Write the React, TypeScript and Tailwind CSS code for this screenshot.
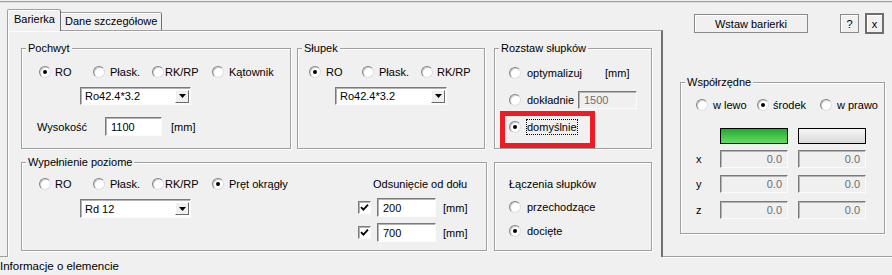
import React from "react";

const sunken =
  "border border-t-[#7a7a7a] border-l-[#7a7a7a] border-r-[#fbfbfb] border-b-[#fbfbfb] shadow-[inset_1px_1px_0_#b4b4b4]";

function Circle({ checked }: { checked?: boolean }) {
  return (
    <span className="flex w-[12px] h-[12px] shrink-0 items-center justify-center rounded-full border border-t-[#858585] border-l-[#858585] border-r-[#dedede] border-b-[#dedede] bg-white shadow-[inset_1px_1px_0_#cfcfcf]">
      {checked && <span className="w-[4px] h-[4px] rounded-full bg-black" />}
    </span>
  );
}

function Radio({
  checked,
  label,
  w = "",
  gap,
  focus,
}: {
  checked?: boolean;
  label: string;
  w?: string;
  gap: string;
  focus?: boolean;
}) {
  return (
    <div className={`flex items-center shrink-0 ${w}`}>
      <Circle checked={checked} />
      <span
        className={`${gap} whitespace-nowrap ${
          focus ? "border border-dotted border-black leading-[14px]" : ""
        }`}
      >
        {label}
      </span>
    </div>
  );
}

function Combo({ value, w, h }: { value: string; w: string; h: string }) {
  return (
    <div className={`flex items-center bg-white ${sunken} ${w} ${h}`}>
      <span className="pl-[4px] flex-1 whitespace-nowrap">{value}</span>
      <span className="mr-[1px] w-[14px] h-[13px] flex items-center justify-center bg-[#f0f0f0] border border-t-white border-l-white border-r-[#6a6a6a] border-b-[#6a6a6a]">
        <svg width="7" height="4" viewBox="0 0 7 4">
          <polygon points="0,0 7,0 3.5,4" fill="#000" />
        </svg>
      </span>
    </div>
  );
}

function Input({
  value,
  w,
  h,
  disabled,
  right,
}: {
  value: string;
  w: string;
  h: string;
  disabled?: boolean;
  right?: boolean;
}) {
  return (
    <div
      className={`flex items-center shrink-0 ${sunken} ${w} ${h} ${
        disabled ? "bg-[#f0f0f0] text-[#6d6d6d]" : "bg-white"
      } ${right ? "justify-end pr-[5px]" : "pl-[5px]"}`}
    >
      {value}
    </div>
  );
}

function Check() {
  return (
    <span className={`flex w-[13px] h-[13px] shrink-0 items-center justify-center bg-white ${sunken}`}>
      <svg width="9" height="9" viewBox="0 0 9 9">
        <path d="M1 4.2 L3.4 6.6 L8 1.6" stroke="#000" strokeWidth="1.8" fill="none" />
      </svg>
    </span>
  );
}

function Group({
  title,
  className,
  children,
}: {
  title?: string;
  className: string;
  children?: React.ReactNode;
}) {
  return (
    <div
      className={`relative shrink-0 border border-[#a0a0a0] shadow-[inset_1px_1px_0_#fff,1px_1px_0_#fff] ${className}`}
    >
      {title && (
        <div className="-mt-[7px] ml-[4px] w-fit px-[2px] bg-[#f0f0f0] leading-[13px] whitespace-nowrap">
          {title}
        </div>
      )}
      {children}
    </div>
  );
}

export default function App() {
  return (
    <div className="w-[892px] h-[275px] overflow-hidden bg-[#f0f0f0] text-black text-[11px] leading-[14px] font-['Liberation_Sans',Arial,sans-serif]">
      <div className="h-[1px]" />
      <div className="h-[1px] bg-[#a0a0a0]" />
      <div className="h-[1px] bg-[#dcdcdc]" />
      <div className="flex h-[254px]">
        {/* left corner tick */}
        <div className="w-[7px] shrink-0 flex flex-col justify-end">
          <div className="h-[2px] border-b border-[#a0a0a0]" />
        </div>
        {/* left: tab control */}
        <div className="w-[656px] shrink-0 flex flex-col">
          <div className="mt-[6px] h-[21px] flex items-end">
            <div className="relative z-10 -mb-[1px] h-[22px] w-[54px] border-l border-t border-r border-[#a0a0a0] border-r-[#6f6f6f] rounded-t-[2px] bg-[#f0f0f0] shadow-[inset_1px_1px_0_#fff] pl-[6px] pt-[2px]">
              Barierka
            </div>
            <div className="h-[18px] w-[101px] border-t border-r border-[#a0a0a0] border-r-[#6f6f6f] rounded-tr-[2px] shadow-[inset_0_1px_0_#fff] pl-[4px] pt-[1px] whitespace-nowrap">
              Dane szczegółowe
            </div>
          </div>
          <div className="flex-1 border-l border-t border-r-2 border-[#a0a0a0] border-r-[#707070] shadow-[inset_1px_1px_0_#fff] pl-[13px] pt-[17px]">
            {/* top row */}
            <div className="flex h-[101px]">
              <Group title="Pochwyt" className="w-[270px] h-[101px]">
                <div className="mt-[10px] ml-[17px] flex h-[14px]">
                  <Radio checked label="RO" w="w-[54px]" gap="ml-[4px]" />
                  <Radio label="Płask." w="w-[59px]" gap="ml-[5px]" />
                  <Radio label="RK/RP" w="w-[60px]" gap="ml-[1px]" />
                  <Radio label="Kątownik" gap="ml-[5px]" />
                </div>
                <div className="mt-[8px] ml-[58px]">
                  <Combo value="Ro42.4*3.2" w="w-[111px]" h="h-[18px]" />
                </div>
                <div className="mt-[12px] flex items-center h-[19px]">
                  <span className="ml-[15px] w-[68px]">Wysokość</span>
                  <Input value="1100" w="w-[57px]" h="h-[19px]" />
                  <span className="ml-[9px]">[mm]</span>
                </div>
              </Group>
              <Group title="Słupek" className="ml-[6px] w-[188px] h-[101px]">
                <div className="mt-[10px] ml-[11px] flex h-[14px]">
                  <Radio checked label="RO" w="w-[53px]" gap="ml-[5px]" />
                  <Radio label="Płask." w="w-[59px]" gap="ml-[5px]" />
                  <Radio label="RK/RP" gap="ml-[4px]" />
                </div>
                <div className="mt-[8px] ml-[37px]">
                  <Combo value="Ro42.4*3.2" w="w-[112px]" h="h-[18px]" />
                </div>
              </Group>
              <Group title="Rozstaw słupków" className="ml-[9px] w-[158px] h-[101px]">
                <div className="mt-[11px] ml-[14px] flex items-center h-[14px]">
                  <Radio label="optymalizuj" w="w-[96px]" gap="ml-[6px]" />
                  <span>[mm]</span>
                </div>
                <div className="mt-[11px] ml-[14px] flex items-center h-[18px]">
                  <Radio label="dokładnie" w="w-[69px]" gap="ml-[6px]" />
                  <div className="-mt-[1px]">
                    <Input value="1500" w="w-[59px]" h="h-[18px]" disabled />
                  </div>
                </div>
                <div className="mt-[10px] ml-[14px] flex items-center h-[16px]">
                  <Radio checked focus label="domyślnie" gap="ml-[5px]" />
                </div>
                <div className="absolute left-[5px] top-[62px] w-[95px] h-[37px] border-[5px] border-[#ed1c24]" />
              </Group>
            </div>
            {/* bottom row */}
            <div className="mt-[13px] flex h-[89px]">
              <Group title="Wypełnienie poziome" className="w-[466px] h-[89px]">
                <div className="flex">
                  <div className="w-[336px] shrink-0">
                    <div className="mt-[8px] ml-[17px] flex h-[14px]">
                      <Radio label="RO" w="w-[54px]" gap="ml-[4px]" />
                      <Radio label="Płask." w="w-[59px]" gap="ml-[5px]" />
                      <Radio label="RK/RP" w="w-[60px]" gap="ml-[1px]" />
                      <Radio checked label="Pręt okrągły" gap="ml-[5px]" />
                    </div>
                    <div className="mt-[8px] ml-[58px]">
                      <Combo value="Rd 12" w="w-[111px]" h="h-[19px]" />
                    </div>
                  </div>
                  <div>
                    <div className="mt-[8px] ml-[15px] h-[14px] whitespace-nowrap">Odsunięcie od dołu</div>
                    <div className="mt-[7px] flex items-center h-[19px]">
                      <Check />
                      <div className="ml-[6px]">
                        <Input value="200" w="w-[59px]" h="h-[19px]" />
                      </div>
                      <span className="ml-[7px]">[mm]</span>
                    </div>
                    <div className="mt-[6px] flex items-center h-[19px]">
                      <Check />
                      <div className="ml-[6px]">
                        <Input value="700" w="w-[59px]" h="h-[19px]" />
                      </div>
                      <span className="ml-[7px]">[mm]</span>
                    </div>
                  </div>
                </div>
              </Group>
              <Group className="ml-[7px] w-[158px] h-[89px]">
                <div className="mt-[14px] ml-[14px] h-[14px]">Łączenia słupków</div>
                <div className="mt-[9px] ml-[14px] flex h-[14px]">
                  <Radio label="przechodzące" gap="ml-[6px]" />
                </div>
                <div className="mt-[10px] ml-[14px] flex h-[14px]">
                  <Radio checked label="docięte" gap="ml-[6px]" />
                </div>
              </Group>
            </div>
          </div>
        </div>
        {/* right panel */}
        <div className="flex-1 border-b border-[#a0a0a0] shadow-[0_1px_0_#fff]">
          <div className="mt-[10px] h-[21px] flex items-center">
            <div className="ml-[31px] w-[114px] h-[19px] flex items-center justify-center border border-[#8a8a8a] shadow-[inset_1px_1px_0_#fff]">
              Wstaw barierki
            </div>
            <div className="ml-[32px] w-[19px] h-[19px] flex items-center justify-center border border-[#8a8a8a] shadow-[inset_1px_1px_0_#fff]">
              ?
            </div>
            <div className="ml-[6px] w-[19px] h-[21px] flex items-center justify-center border-2 border-[#6e6e6e] shadow-[inset_1px_1px_0_#fff]">
              x
            </div>
          </div>
          <Group title="Współrzędne" className="mt-[48px] ml-[17px] w-[205px] h-[152px]">
            <div className="mt-[9px] ml-[15px] flex h-[14px]">
              <Radio label="w lewo" w="w-[61px]" gap="ml-[5px]" />
              <Radio checked label="środek" w="w-[63px]" gap="ml-[4px]" />
              <Radio label="w prawo" gap="ml-[5px]" />
            </div>
            <div className="mt-[16px] ml-[39px] flex h-[16px]">
              <div className="w-[68px] h-[16px] border border-black bg-linear-to-b from-[#22a832] to-[#62dc62]" />
              <div className="ml-[10px] w-[68px] h-[16px] border border-black bg-linear-to-b from-[#f6f6f6] to-[#dadada]" />
            </div>
            <div className="mt-[6px] ml-[15px] flex items-center h-[18px]">
              <span className="w-[24px]">x</span>
              <Input value="0.0" w="w-[68px]" h="h-[18px]" disabled right />
              <div className="ml-[10px]">
                <Input value="0.0" w="w-[68px]" h="h-[18px]" disabled right />
              </div>
            </div>
            <div className="mt-[7px] ml-[15px] flex items-center h-[18px]">
              <span className="w-[24px]">y</span>
              <Input value="0.0" w="w-[68px]" h="h-[18px]" disabled right />
              <div className="ml-[10px]">
                <Input value="0.0" w="w-[68px]" h="h-[18px]" disabled right />
              </div>
            </div>
            <div className="mt-[8px] ml-[15px] flex items-center h-[18px]">
              <span className="w-[24px]">z</span>
              <Input value="0.0" w="w-[68px]" h="h-[18px]" disabled right />
              <div className="ml-[10px]">
                <Input value="0.0" w="w-[68px]" h="h-[18px]" disabled right />
              </div>
            </div>
          </Group>
        </div>
      </div>
      <div className="h-[18px] leading-[18px] text-[11.5px] whitespace-nowrap">Informacje o elemencie</div>
    </div>
  );
}
